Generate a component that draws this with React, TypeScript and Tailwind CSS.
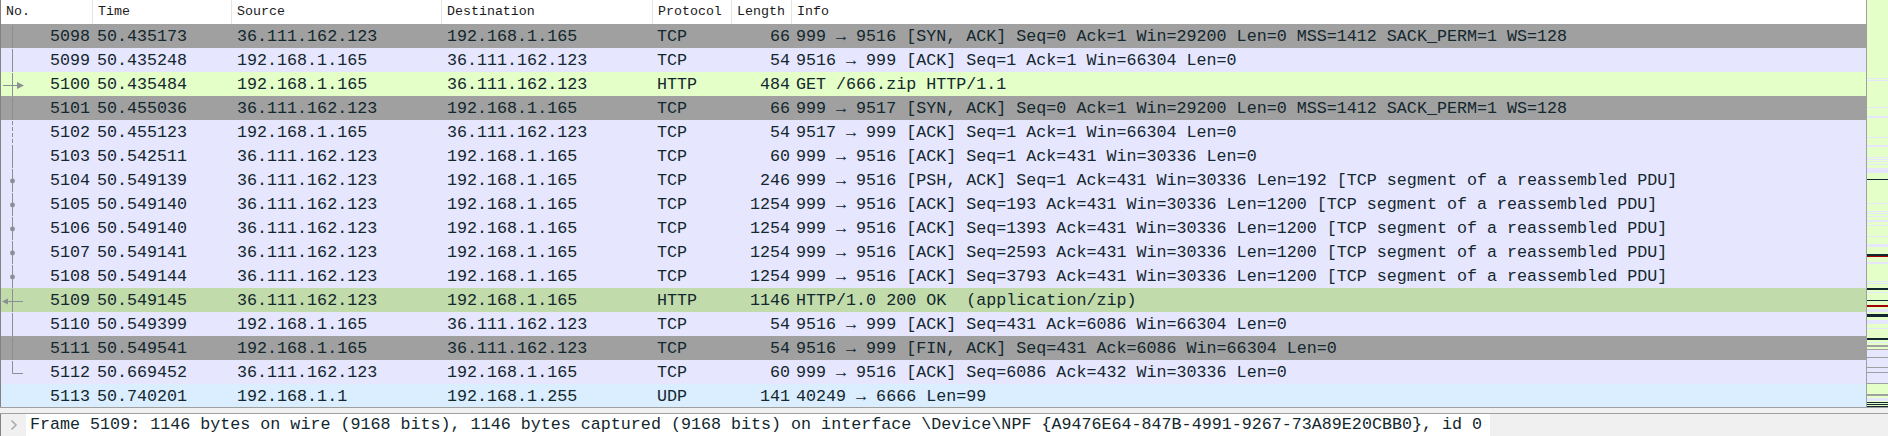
import React from "react";

type Row = {
  no: string;
  time: string;
  src: string;
  dst: string;
  proto: string;
  len: string;
  info: string;
  bg: string;
  mark: "solid" | "first" | "right" | "dashStart" | "dash" | "dot" | "left" | "end" | "none";
};

const ROWS: Row[] = [
  { no: "5098", time: "50.435173", src: "36.111.162.123", dst: "192.168.1.165", proto: "TCP", len: "66", info: "999 → 9516 [SYN, ACK] Seq=0 Ack=1 Win=29200 Len=0 MSS=1412 SACK_PERM=1 WS=128", bg: "bg-[#a0a0a0]", mark: "first" },
  { no: "5099", time: "50.435248", src: "192.168.1.165", dst: "36.111.162.123", proto: "TCP", len: "54", info: "9516 → 999 [ACK] Seq=1 Ack=1 Win=66304 Len=0", bg: "bg-[#e7e6ff]", mark: "solid" },
  { no: "5100", time: "50.435484", src: "192.168.1.165", dst: "36.111.162.123", proto: "HTTP", len: "484", info: "GET /666.zip HTTP/1.1", bg: "bg-[#e4ffc7]", mark: "right" },
  { no: "5101", time: "50.455036", src: "36.111.162.123", dst: "192.168.1.165", proto: "TCP", len: "66", info: "999 → 9517 [SYN, ACK] Seq=0 Ack=1 Win=29200 Len=0 MSS=1412 SACK_PERM=1 WS=128", bg: "bg-[#a0a0a0]", mark: "dashStart" },
  { no: "5102", time: "50.455123", src: "192.168.1.165", dst: "36.111.162.123", proto: "TCP", len: "54", info: "9517 → 999 [ACK] Seq=1 Ack=1 Win=66304 Len=0", bg: "bg-[#e7e6ff]", mark: "dash" },
  { no: "5103", time: "50.542511", src: "36.111.162.123", dst: "192.168.1.165", proto: "TCP", len: "60", info: "999 → 9516 [ACK] Seq=1 Ack=431 Win=30336 Len=0", bg: "bg-[#e7e6ff]", mark: "solid" },
  { no: "5104", time: "50.549139", src: "36.111.162.123", dst: "192.168.1.165", proto: "TCP", len: "246", info: "999 → 9516 [PSH, ACK] Seq=1 Ack=431 Win=30336 Len=192 [TCP segment of a reassembled PDU]", bg: "bg-[#e7e6ff]", mark: "dot" },
  { no: "5105", time: "50.549140", src: "36.111.162.123", dst: "192.168.1.165", proto: "TCP", len: "1254", info: "999 → 9516 [ACK] Seq=193 Ack=431 Win=30336 Len=1200 [TCP segment of a reassembled PDU]", bg: "bg-[#e7e6ff]", mark: "dot" },
  { no: "5106", time: "50.549140", src: "36.111.162.123", dst: "192.168.1.165", proto: "TCP", len: "1254", info: "999 → 9516 [ACK] Seq=1393 Ack=431 Win=30336 Len=1200 [TCP segment of a reassembled PDU]", bg: "bg-[#e7e6ff]", mark: "dot" },
  { no: "5107", time: "50.549141", src: "36.111.162.123", dst: "192.168.1.165", proto: "TCP", len: "1254", info: "999 → 9516 [ACK] Seq=2593 Ack=431 Win=30336 Len=1200 [TCP segment of a reassembled PDU]", bg: "bg-[#e7e6ff]", mark: "dot" },
  { no: "5108", time: "50.549144", src: "36.111.162.123", dst: "192.168.1.165", proto: "TCP", len: "1254", info: "999 → 9516 [ACK] Seq=3793 Ack=431 Win=30336 Len=1200 [TCP segment of a reassembled PDU]", bg: "bg-[#e7e6ff]", mark: "dot" },
  { no: "5109", time: "50.549145", src: "36.111.162.123", dst: "192.168.1.165", proto: "HTTP", len: "1146", info: "HTTP/1.0 200 OK  (application/zip)", bg: "bg-[#c2dbab]", mark: "left" },
  { no: "5110", time: "50.549399", src: "192.168.1.165", dst: "36.111.162.123", proto: "TCP", len: "54", info: "9516 → 999 [ACK] Seq=431 Ack=6086 Win=66304 Len=0", bg: "bg-[#e7e6ff]", mark: "solid" },
  { no: "5111", time: "50.549541", src: "192.168.1.165", dst: "36.111.162.123", proto: "TCP", len: "54", info: "9516 → 999 [FIN, ACK] Seq=431 Ack=6086 Win=66304 Len=0", bg: "bg-[#a0a0a0]", mark: "solid" },
  { no: "5112", time: "50.669452", src: "36.111.162.123", dst: "192.168.1.165", proto: "TCP", len: "60", info: "999 → 9516 [ACK] Seq=6086 Ack=432 Win=30336 Len=0", bg: "bg-[#e7e6ff]", mark: "end" },
  { no: "5113", time: "50.740201", src: "192.168.1.1", dst: "192.168.1.255", proto: "UDP", len: "141", info: "40249 → 6666 Len=99", bg: "bg-[#daeeff]", mark: "none" },
];

const LINE = "#8a8f95";

function Gutter({ mark }: { mark: Row["mark"] }) {
  return (
    <svg width="24" height="24" viewBox="0 0 24 24" className="shrink-0">
      {(mark === "solid" || mark === "first" || mark === "right" || mark === "dot" || mark === "left") && (
        <line x1="11.5" y1="0" x2="11.5" y2="24" stroke={LINE} strokeWidth="1" />
      )}
      {mark === "dashStart" && (
        <>
          <line x1="11.5" y1="0" x2="11.5" y2="20" stroke={LINE} strokeWidth="1" />
          <line x1="11.5" y1="20" x2="11.5" y2="24" stroke={LINE} strokeWidth="1" strokeDasharray="4 2" />
        </>
      )}
      {mark === "dash" && (
        <line x1="11.5" y1="0" x2="11.5" y2="24" stroke={LINE} strokeWidth="1" strokeDasharray="4 2" />
      )}
      {mark === "right" && (
        <>
          <line x1="2" y1="12.5" x2="16" y2="12.5" stroke={LINE} strokeWidth="1" />
          <polygon points="16,9 23,12.5 16,16" fill={LINE} />
        </>
      )}
      {mark === "left" && (
        <>
          <line x1="7" y1="12.5" x2="22" y2="12.5" stroke={LINE} strokeWidth="1" />
          <polygon points="1,12.5 7,9.5 7,15.5" fill={LINE} />
        </>
      )}
      {mark === "dot" && <circle cx="11.5" cy="12" r="2.4" fill={LINE} />}
      {mark === "end" && (
        <>
          <line x1="11.5" y1="0" x2="11.5" y2="12.5" stroke={LINE} strokeWidth="1" />
          <line x1="11.5" y1="12.5" x2="22" y2="12.5" stroke={LINE} strokeWidth="1" />
        </>
      )}
    </svg>
  );
}

const GRID = "grid grid-cols-[92px_139px_210px_211px_79px_60px_1fr]";

type Stripe = [number, number, string];
const LAV = "#e7e6ff";
const DARK = "#12272e";
const RED = "#a40000";
const GRAY = "#a0a0a0";
const STRIPES: Stripe[] = [
  [78, 1, LAV], [80, 1, LAV], [107, 1, LAV], [116, 2, LAV], [137, 1, LAV], [145, 2, LAV],
  [157, 1, LAV], [159, 1, LAV], [161, 1, LAV], [164, 1, LAV], [168, 5, LAV], [179, 1, DARK],
  [203, 1, LAV], [213, 1, LAV], [216, 1, LAV], [211, 1, LAV], [220, 2, LAV], [225, 1, LAV],
  [236, 1, LAV], [244, 3, LAV], [254, 3, DARK], [256, 1, RED], [262, 2, LAV], [281, 1, LAV],
  [283, 1, LAV], [288, 2, DARK], [292, 1, LAV], [300, 1, DARK], [305, 2, RED], [309, 3, LAV],
  [314, 3, DARK], [320, 4, LAV], [328, 1, LAV], [338, 2, DARK], [342, 1, LAV], [345, 2, GRAY],
  [349, 1, GRAY], [350, 34, LAV], [357, 1, GRAY], [367, 1, GRAY], [372, 1, GRAY], [383, 1, GRAY],
  [394, 2, GRAY], [398, 3, LAV], [402, 1, DARK], [404, 1, DARK], [406, 1, DARK],
];

function Minimap() {
  return (
    <svg width="21" height="407" viewBox="0 0 21 407" className="block">
      <rect x="0" y="0" width="21" height="407" fill="#e4ffc7" />
      {STRIPES.map(([y, h, c], i) => (
        <rect key={i} x="0" y={y} width="21" height={h} fill={c} />
      ))}
    </svg>
  );
}

export default function App() {
  const mono = "font-['Liberation_Mono','DejaVu_Sans_Mono',monospace]";
  return (
    <div className={`w-[1888px] h-[436px] bg-[#f0f0f0] flex flex-col overflow-hidden ${mono} text-[#12272e]`}>
      {/* packet list */}
      <div className="h-[408px] flex border-b border-[#a0a0a0] overflow-hidden shrink-0">
        <div className="flex-1 flex flex-col border-l border-[#838383] bg-white overflow-hidden">
          {/* header */}
          <div className={`${GRID} h-[24px] shrink-0 bg-white text-[13.3px] text-[#1a1a1a]`}>
            {["No.", "Time", "Source", "Destination", "Protocol", "Length", "Info"].map((h, i) => (
              <div
                key={h}
                className={`flex items-center pl-[5px] ${i < 6 ? "border-r border-[#e5e5e5]" : ""}`}
              >
                {h}
              </div>
            ))}
          </div>
          {/* rows */}
          {ROWS.map((r) => (
            <div key={r.no} className={`${GRID} h-[24px] shrink-0 items-center text-[16.7px] whitespace-pre ${r.bg}`}>
              <div className="flex items-center h-full">
                <Gutter mark={r.mark} />
                <span className="flex-1 text-right pr-[3px]">{r.no}</span>
              </div>
              <span className="pl-[4px]">{r.time}</span>
              <span className="pl-[5px]">{r.src}</span>
              <span className="pl-[5px]">{r.dst}</span>
              <span className="pl-[4px]">{r.proto}</span>
              <span className="text-right pr-[2px]">{r.len}</span>
              <span className="pl-[4px] overflow-hidden">{r.info}</span>
            </div>
          ))}
        </div>
        <div className="w-[22px] shrink-0 border-l border-[#a0a0a0] bg-[#e4ffc7]">
          <Minimap />
        </div>
      </div>
      {/* gap */}
      <div className="h-[5px] shrink-0" />
      {/* packet details */}
      <div className="h-[23px] shrink-0 border-t border-[#a0a0a0] flex">
        <div className="flex h-full border-l border-[#838383]">
          <div className="w-[25px] flex items-center justify-center bg-[#f0f0f0]">
            <svg width="10" height="14" viewBox="0 0 10 14">
              <path d="M2.5 2.5 L7 7 L2.5 11.5" fill="none" stroke="#a8a8a8" strokeWidth="1.5" />
            </svg>
          </div>
          <div className="bg-white flex items-center pl-[4px] pr-[8px] text-[16.7px] whitespace-pre">
            {"Frame 5109: 1146 bytes on wire (9168 bits), 1146 bytes captured (9168 bits) on interface \\Device\\NPF {A9476E64-847B-4991-9267-73A89E20CBB0}, id 0"}
          </div>
        </div>
      </div>
    </div>
  );
}
